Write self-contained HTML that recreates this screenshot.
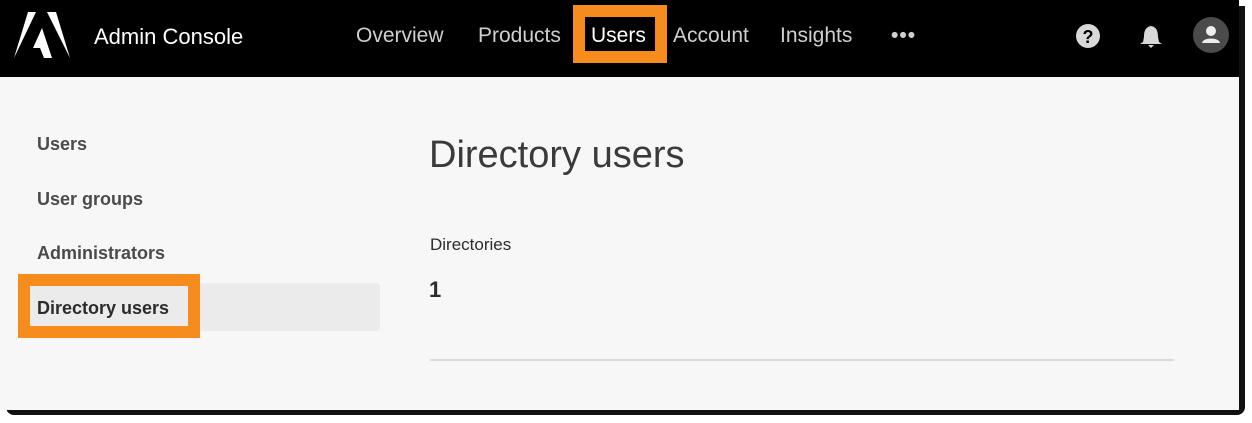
<!DOCTYPE html>
<html><head><meta charset="utf-8"><style>
body{margin:0;width:1252px;height:423px;background:#fff;position:relative;overflow:hidden;font-family:"Liberation Sans",sans-serif}
#shadow{position:absolute;left:6px;top:6px;width:1239px;height:409px;background:#111;border-radius:0 0 8px 8px}
#page{position:absolute;left:0;top:0;width:1239px;height:410px;background:#f7f7f7}
#hdr{position:absolute;left:0;top:0;width:1239px;height:77px;background:#000}
.nav{position:absolute;top:24px;font-size:21px;color:#cfcfcf}
.side{position:absolute;left:37px;font-size:18px;font-weight:bold;color:#4b4b4b}
</style></head><body>
<div id="shadow"></div>
<div id="page">
<div id="hdr">
<svg style="position:absolute;left:14px;top:12px" width="56" height="46" viewBox="0 0 56 46"><path d="M0 46 L14 0 L22 0 Z" fill="#fff"/><path d="M33 0 L42 0 L56 46 Z" fill="#fff"/><path d="M28 16 L38 46 L30 46 L26 36 L19 36 Z" fill="#fff"/></svg>
<div style="position:absolute;left:94px;top:24px;font-size:22px;color:#fff">Admin Console</div>
<div class="nav" style="left:356px">Overview</div>
<div class="nav" style="left:478px">Products</div>
<div style="position:absolute;left:573px;top:5px;width:70px;height:34px;border:12px solid #f68b1e"></div>
<div class="nav" style="left:591px;color:#fff">Users</div>
<div class="nav" style="left:673px">Account</div>
<div class="nav" style="left:780px">Insights</div>
<div class="nav" style="left:891px;top:24px;font-weight:bold;letter-spacing:1px">&#8226;&#8226;&#8226;</div>
<svg style="position:absolute;left:1075px;top:23px" width="26" height="26" viewBox="0 0 26 26"><circle cx="13" cy="13" r="12" fill="#d8d8d8"/><text x="13" y="20" text-anchor="middle" font-family="Liberation Sans" font-weight="bold" font-size="18" fill="#000">?</text></svg>
<svg style="position:absolute;left:1138px;top:22px" width="26" height="28" viewBox="0 0 26 28"><path d="M13 1 L13 4 C7 5 6 10 6 15 L5 20 L2 22 L24 22 L21 20 L20 15 C20 10 19 5 13 4Z" fill="#d8d8d8"/><path d="M10 23 L16 23 L13 26Z" fill="#d8d8d8"/></svg>
<svg style="position:absolute;left:1193px;top:17px" width="36" height="36" viewBox="0 0 36 36"><circle cx="18" cy="18" r="18" fill="#4b4b4b"/><circle cx="18" cy="14" r="5" fill="#eee"/><path d="M9 26 C10 20 26 20 27 26 Z" fill="#eee"/></svg>
</div>
<div class="side" style="top:134px">Users</div>
<div class="side" style="top:189px">User groups</div>
<div class="side" style="top:243px">Administrators</div>
<div style="position:absolute;left:18px;top:283px;width:362px;height:48px;background:#ebebeb;border-radius:4px"></div>
<div style="position:absolute;left:18px;top:274px;width:158px;height:40px;border:12px solid #f68b1e"></div>
<div class="side" style="top:298px;color:#2c2c2c">Directory users</div>
<div style="position:absolute;left:429px;top:134px;font-size:38px;color:#3a3a3a">Directory users</div>
<div style="position:absolute;left:430px;top:235px;font-size:17px;color:#2c2c2c">Directories</div>
<div style="position:absolute;left:429px;top:277px;font-size:22px;font-weight:bold;color:#2c2c2c">1</div>
<div style="position:absolute;left:430px;top:359px;width:744px;height:2px;background:#dadada"></div>
</div>
</body></html>
